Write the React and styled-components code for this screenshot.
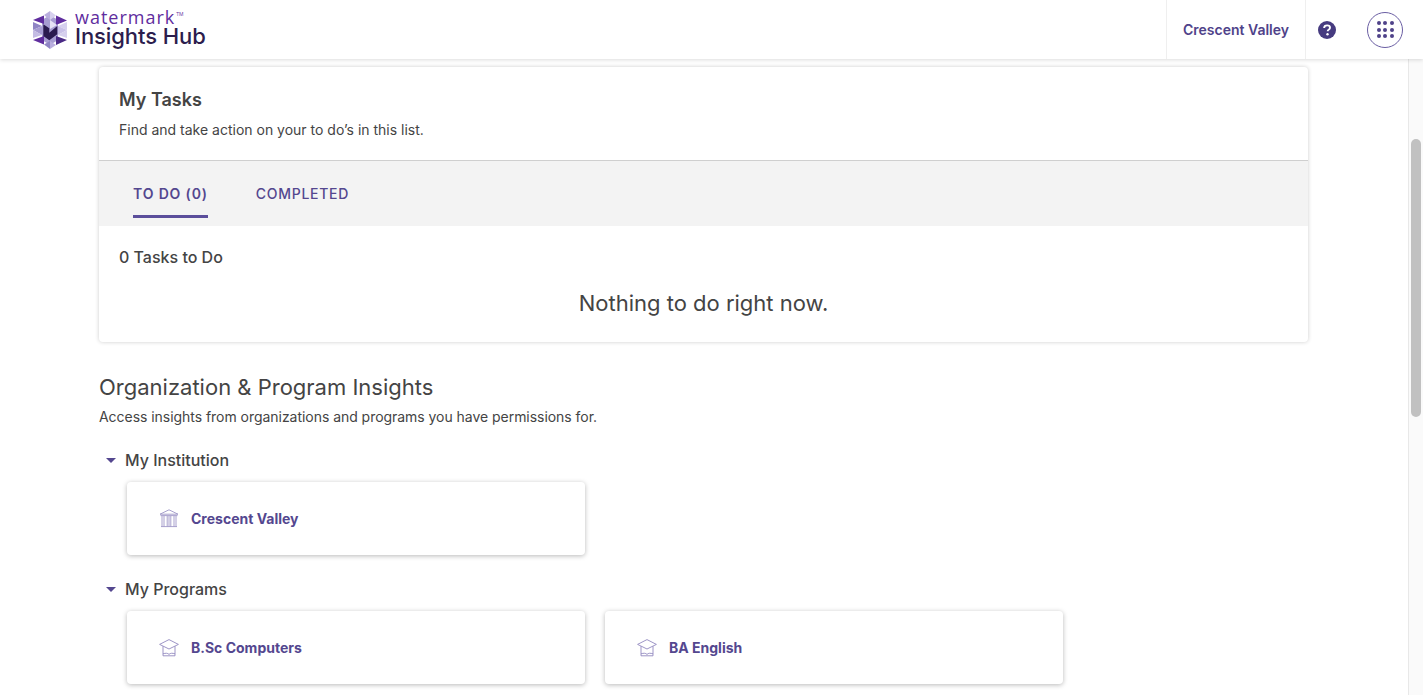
import React from "react";
import styled, { createGlobalStyle } from "styled-components";

const Global = createGlobalStyle`
  html, body { margin: 0; height: 100%; overflow: hidden; background: #fff; }
  #root { height: 100%; }
  * { box-sizing: border-box; }
  body { font-family: Inter, "Liberation Sans", sans-serif; color: #444; }
`;

const Page = styled.div`
  height: 100vh;
  display: flex;
  flex-direction: column;
  overflow: hidden;
`;
const Header = styled.header`
  flex: 0 0 59px;
  display: flex;
  align-items: stretch;
  justify-content: space-between;
  background: #fff;
  box-shadow: 0 1px 4px rgba(0, 0, 0, 0.14);
  position: relative;
  z-index: 2;
`;
const Brand = styled.div`
  display: flex;
  align-items: center;
  gap: 8px;
  padding-left: 33px;
`;
const BrandText = styled.div`
  display: flex;
  flex-direction: column;
`;
const Watermark = styled.span`
  font-size: 18px;
  line-height: 14px;
  letter-spacing: 1px;
  font-weight: 500;
  color: #5f2d9e;
  font-family: "Open Sans", sans-serif;
  sup { font-size: 5px; letter-spacing: 0; line-height: 0; vertical-align: 8px; margin-left: 1px; }
`;
const Product = styled.span`
  font-size: 22px;
  line-height: 25px;
  letter-spacing: -0.08px;
  font-weight: 500;
  color: #2c1d4d;
`;
const HeaderRight = styled.div`
  display: flex;
  align-items: stretch;
`;
const OrgName = styled.div`
  width: 140px;
  display: flex;
  align-items: center;
  justify-content: center;
  border-left: 1px solid #efefef;
  border-right: 1px solid #efefef;
  font-size: 14px;
  font-weight: 600;
  color: #4f4289;
`;
const Help = styled.div`
  width: 42px;
  display: flex;
  align-items: center;
  justify-content: center;
`;
const AppsCell = styled.div`
  width: 75px;
  display: flex;
  align-items: center;
  padding-left: 19px;
`;
const AppsButton = styled.div`
  width: 36px;
  height: 36px;
  border-radius: 50%;
  border: 1px solid #6a5ea3;
  display: grid;
  grid-template-columns: repeat(3, 4px);
  grid-auto-rows: 4px;
  gap: 2.5px;
  justify-content: center;
  align-content: center;
`;
const Dot = styled.i`
  display: block;
  width: 4px;
  height: 4px;
  border-radius: 50%;
  background: #4f4289;
`;
const Body = styled.div`
  flex: 1;
  display: flex;
  min-height: 0;
`;
const Content = styled.main`
  flex: 1;
  min-width: 0;
  overflow: hidden;
  padding: 8px 100px 0 99px;
`;
const Scrollbar = styled.div`
  flex: 0 0 15px;
  background: #fafafa;
  border-left: 1px solid #e8e8e8;
  padding: 80px 2px 0 2px;
`;
const Thumb = styled.div`
  height: 278px;
  border-radius: 6px;
  background: #c1c1c1;
`;
const Card = styled.section`
  background: #fff;
  border-radius: 4px;
  box-shadow: 0 0 4px rgba(0, 0, 0, 0.2);
`;
const CardHead = styled.div`
  height: 94px;
  padding: 21px 20px 0;
  border-bottom: 1px solid #cfcfcf;
`;
const CardTitle = styled.h2`
  margin: 0;
  font-size: 18px;
  line-height: 23px;
  font-weight: 600;
  color: #444;
`;
const CardSub = styled.p`
  margin: 10px 0 0;
  font-size: 14px;
  line-height: 18px;
  color: #444;
`;
const Tabs = styled.div`
  height: 65px;
  background: #f3f3f3;
  display: flex;
  gap: 48px;
  padding: 0 34px;
`;
const Tab = styled.div`
  height: 57px;
  display: flex;
  align-items: center;
  padding-top: 10px;
  font-size: 14px;
  letter-spacing: ${(p) => (p.$active ? "0.85px" : "0.72px")};
  font-weight: ${(p) => (p.$active ? 600 : 500)};
  color: #54478f;
  border-bottom: 3px solid ${(p) => (p.$active ? "#5b4e9b" : "transparent")};
`;
const CardBody = styled.div`
  height: 116px;
  padding: 21px 20px 0;
`;
const Count = styled.div`
  font-size: 16px;
  line-height: 20px;
  font-weight: 500;
  color: #444;
`;
const Empty = styled.div`
  margin-top: 22px;
  text-align: center;
  font-size: 22px;
  line-height: 28px;
  color: #444;
`;
const SectionTitle = styled.h2`
  margin: 31px 0 0;
  font-size: 22px;
  line-height: 28px;
  font-weight: 400;
  color: #444;
`;
const SectionSub = styled.p`
  margin: 7px 0 0;
  font-size: 14px;
  line-height: 18px;
  letter-spacing: -0.04px;
  color: #444;
`;
const GroupHead = styled.div`
  display: flex;
  align-items: center;
  gap: 9px;
  padding-left: 7px;
  height: 20px;
  margin-top: ${(p) => p.$top}px;
  font-size: 16px;
  font-weight: 500;
  color: #444;
`;
const Caret = styled.span`
  width: 0;
  height: 0;
  border-left: 5px solid transparent;
  border-right: 5px solid transparent;
  border-top: 5px solid #54478f;
`;
const Tiles = styled.div`
  display: flex;
  gap: 20px;
  padding-left: 28px;
  margin-top: 12px;
`;
const Tile = styled.div`
  width: 458px;
  height: 73px;
  display: flex;
  align-items: center;
  gap: 12px;
  padding-left: 32px;
  background: #fff;
  border-radius: 4px;
  box-shadow: 0 1px 5px rgba(0, 0, 0, 0.28);
  font-size: 14px;
  font-weight: 700;
  color: #54478f;
`;

const LogoMark = () => (
  <svg width="34" height="38" viewBox="0 0 34 38" aria-hidden="true">
    <polygon points="9,9 17,4 25,9 25,29 17,34 9,29" fill="#a79dd2" />
    <polygon points="0,9 11,4.5 11,13" fill="#5f2d9e" />
    <polygon points="17,0 17,9 11,4" fill="#b9aede" />
    <polygon points="17,0 23,4.5 17,9" fill="#d6d0ee" />
    <polygon points="23,4.5 34,9.5 23,14" fill="#5f2d9e" />
    <polygon points="0,11 9,15 0,19" fill="#8f84c4" />
    <polygon points="0,19 9,15 9,24" fill="#a79dd2" />
    <polygon points="0,19 9,24 0,27" fill="#c4bce4" />
    <polygon points="34,11 34,19 25,15" fill="#d6d0ee" />
    <polygon points="34,19 25,24 25,15" fill="#c9c1e8" />
    <polygon points="34,19 34,27 25,24" fill="#d6d0ee" />
    <polygon points="0,29 11,25 11,33.5" fill="#5f2d9e" />
    <polygon points="34,29 23,34 23,25" fill="#4a2a85" />
    <polygon points="17,30 17,38 11,33.5" fill="#8f84c4" />
    <polygon points="17,30 23,34 17,38" fill="#b9aede" />
    <polygon points="17,9 24,14 17,18" fill="#e6e2f5" />
    <polygon points="10.3,13.3 16.3,17.3 16.3,21.7 24.3,15 24.3,23.3 16.3,29.3 10.3,25" fill="#2a1a4f" />
  </svg>
);

const HelpIcon = () => (
  <svg width="18" height="18" viewBox="0 0 18 18" aria-hidden="true">
    <circle cx="9" cy="9" r="9" fill="#463b80" />
    <path d="M6.1 7c.1-1.7 1.3-2.6 3-2.6 1.6 0 2.9.9 2.9 2.3 0 1.1-.6 1.6-1.4 2.1-.7.4-.9.7-.9 1.4" fill="none" stroke="#fff" strokeWidth="1.9" />
    <circle cx="9.5" cy="13.3" r="1.2" fill="#fff" />
  </svg>
);

const BankIcon = () => (
  <svg width="20" height="19" viewBox="0 0 20 19" fill="none" stroke="#9289c0" strokeWidth="0.8" aria-hidden="true">
    <path d="M1 5.2 10 .8l9 4.4z" />
    <path d="M1.5 6.6h17M2 17.6h16" />
    <path d="M3 7v10.4M5 7v10.4M8.2 7v10.4M10 7v10.4M11.8 7v10.4M15 7v10.4M17 7v10.4" />
  </svg>
);

const CapIcon = () => (
  <svg width="20" height="18" viewBox="0 0 20 18" fill="none" stroke="#9289c0" strokeWidth="0.9" aria-hidden="true">
    <path d="M10 .6 19.4 5.4 10 10 .6 5.4z" />
    <path d="M4 7.2v9.6h12V7.2" />
    <path d="M4 14.8c2.6-.8 4.6-.8 6 .6 1.4-1.4 3.4-1.4 6-.6" />
  </svg>
);

export default function App() {
  return (
    <Page>
      <Global />
      <Header>
        <Brand>
          <LogoMark />
          <BrandText>
            <Watermark>watermark<sup>TM</sup></Watermark>
            <Product>Insights Hub</Product>
          </BrandText>
        </Brand>
        <HeaderRight>
          <OrgName>Crescent Valley</OrgName>
          <Help><HelpIcon /></Help>
          <AppsCell>
            <AppsButton>
              {Array.from({ length: 9 }, (_, i) => <Dot key={i} />)}
            </AppsButton>
          </AppsCell>
        </HeaderRight>
      </Header>
      <Body>
        <Content>
          <Card>
            <CardHead>
              <CardTitle>My Tasks</CardTitle>
              <CardSub>Find and take action on your to do’s in this list.</CardSub>
            </CardHead>
            <Tabs>
              <Tab $active>TO DO (0)</Tab>
              <Tab>COMPLETED</Tab>
            </Tabs>
            <CardBody>
              <Count>0 Tasks to Do</Count>
              <Empty>Nothing to do right now.</Empty>
            </CardBody>
          </Card>
          <SectionTitle>Organization &amp; Program Insights</SectionTitle>
          <SectionSub>Access insights from organizations and programs you have permissions for.</SectionSub>
          <GroupHead $top={24}><Caret />My Institution</GroupHead>
          <Tiles>
            <Tile><BankIcon />Crescent Valley</Tile>
          </Tiles>
          <GroupHead $top={24}><Caret />My Programs</GroupHead>
          <Tiles>
            <Tile><CapIcon />B.Sc Computers</Tile>
            <Tile><CapIcon />BA English</Tile>
          </Tiles>
        </Content>
        <Scrollbar><Thumb /></Scrollbar>
      </Body>
    </Page>
  );
}
